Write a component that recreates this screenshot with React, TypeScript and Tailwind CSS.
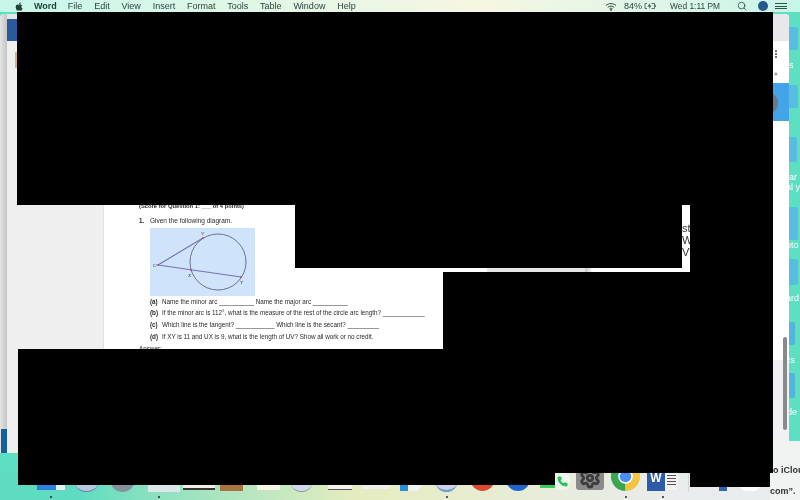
import { Search, Phone, Settings } from "lucide-react";

const menuItems = ["File", "Edit", "View", "Insert", "Format", "Tools", "Table", "Window", "Help"];

const AppleLogo = () => (
  <svg viewBox="0 0 24 24" className="w-[10px] h-[11px] fill-[#22403c]">
    <path d="M17.6 12.7c0-2.5 2-3.7 2.100-3.800-1.200-1.700-3-1.900-3.600-2-1.500-.2-3 .9-3.800.9s-2-.9-3.300-.9c-1.700 0-3.300 1-4.100 2.500-1.800 3.100-.5 7.600 1.200 10.100.9 1.200 1.900 2.600 3.200 2.500 1.300 0 1.800-.8 3.300-.8s2 .8 3.300.8c1.400 0 2.200-1.200 3.100-2.500 1-1.400 1.400-2.800 1.400-2.900-.1 0-2.800-1-2.800-4.400zM15.100 5.200c.7-.9 1.200-2 1-3.200-1 0-2.200.7-2.900 1.500-.6.700-1.200 1.900-1 3 1.100.1 2.200-.5 2.900-1.300z" />
  </svg>
);

const Wifi = () => (
  <svg viewBox="0 0 24 16" className="w-[12px] h-[9px] fill-none stroke-[#2f4a46]" strokeWidth="2">
    <path d="M2 6c6-5 14-5 20 0M5.500 9.500c4-3 9-3 13 0M9 12.500c2-1.300 4-1.300 6 0" />
    <circle cx="12" cy="15" r="1" fill="#2f4a46" />
  </svg>
);

const Battery = () => (
  <svg viewBox="0 0 24 12" className="w-[12px] h-[8px] fill-none stroke-[#2f4a46]">
    <path d="M6 1H2v10h4M15 1h6v10h-6M23 4v4" strokeWidth="1.500" />
    <path d="M12 0 7 7h4l-1 5 5-7h-4z" fill="#2f4a46" stroke="none" />
  </svg>
);

const MenuBar = () => (
  <div className="h-[12px] flex items-center justify-between pl-[14px] pr-[13px] text-[9px] leading-none text-[#2b4642] bg-gradient-to-r from-[#c6f7ea] via-[#f7f6e3] via-60% to-[#c8f5ea] font-['Liberation_Sans',sans-serif] blur-[0.25px]">
    <div className="flex items-center">
      <AppleLogo />
      <span className="ml-[10px] font-bold text-[#1f3a37]">Word</span>
      <div className="ml-[11px] flex gap-[11.800px]">
        {menuItems.map((m) => (
          <span key={m}>{m}</span>
        ))}
      </div>
    </div>
    <div className="flex items-center">
      <Wifi />
      <span className="ml-[7px]">84%</span>
      <span className="ml-[2px]"><Battery /></span>
      <span className="ml-[14px] text-[8.400px]">Wed 1:11 PM</span>
      <Search className="ml-[17px] w-[10px] h-[10px] text-[#33504c]" strokeWidth={2} />
      <span className="ml-[11px] w-[10px] h-[10px] rounded-full bg-[#27578f]" />
      <span className="ml-[7px] flex flex-col gap-[1.500px]">
        <span className="w-[12px] h-[1px] bg-[#33504c]" />
        <span className="w-[12px] h-[1px] bg-[#33504c]" />
        <span className="w-[12px] h-[1px] bg-[#33504c]" />
      </span>
    </div>
  </div>
);

const Diagram = () => (
  <svg viewBox="0 0 105 68" className="ml-[11px] mt-[2px] w-[105px] h-[68px] bg-[#cfe3fa] blur-[0.2px]">
    <circle cx="68" cy="34" r="28" fill="none" stroke="#66758c" strokeWidth="1" />
    <path d="M8 37 53 10" stroke="#7670b4" strokeWidth="1.100" />
    <path d="M8 37 91 49" stroke="#7670b4" strokeWidth="1.100" />
    <g fill="#c2477f">
      <circle cx="8" cy="37" r="1" />
      <circle cx="53" cy="10" r="1" />
      <circle cx="41" cy="42" r="1" />
      <circle cx="91" cy="49" r="1" />
    </g>
    <g fill="#33415c" fontSize="5" fontStyle="italic" fontFamily="'Liberation Serif', serif">
      <text x="51" y="7">V</text>
      <text x="3" y="39">U</text>
      <text x="38" y="49">X</text>
      <text x="90" y="56">Y</text>
    </g>
  </svg>
);

const Question = ({ label, text }: { label: string; text: string }) => (
  <div className="ml-[11px] h-[11.700px] flex items-center whitespace-nowrap">
    <span className="w-[12px] font-bold">{label}</span>
    <span>{text}</span>
  </div>
);

const DocPage = () => (
  <div className="w-[339px] h-full bg-white pl-[35px] text-[6.300px] leading-none text-[#2a2a2a] font-['Liberation_Sans',sans-serif] overflow-hidden blur-[0.3px]">
    <div className="h-[4px] flex items-center font-bold text-[5.800px]">(Score for Question 1: ___ of 4 points)</div>
    <div className="mt-[7px] h-[10px] flex items-center">
      <span className="w-[11px] font-bold">1.</span>
      <span className="text-[6.500px]">Given the following diagram.</span>
    </div>
    <Diagram />
    <div>
      <Question label="(a)" text="Name the minor arc __________ Name the major arc __________" />
      <Question label="(b)" text="If the minor arc is 112°, what is the measure of the rest of the circle arc length? ____________" />
      <Question label="(c)" text="Which line is the tangent? ___________ Which line is the secant? _________" />
      <Question label="(d)" text="If XY is 11 and UX is 9, what is the length of UV?  Show all work or no credit." />
    </div>
    <div className="mt-[3px]">Answer:</div>
  </div>
);

const Sidebar = () => (
  <div className="w-[10px] shrink-0 flex flex-col items-end h-full">
    <div className="mt-[11px] w-[2px] h-[16px] bg-[#e0b070]" />
  </div>
);

const Window = () => (
  <div className="absolute left-0 top-[14px] w-[789px] h-[439px] flex rounded-t-[4px] overflow-hidden bg-[#efefef]">
    <div className="w-[7px] shrink-0 h-full flex flex-col bg-gradient-to-r from-[#e4e4e4] to-[#c4c4c4]">
      <div className="flex-1" />
      <div className="h-[24px] ml-[1px] bg-[#14609f]" />
    </div>
    <div className="flex-1 flex flex-col">
      <div className="h-[5px] shrink-0 bg-[#e6e6e6]" />
      <div className="h-[22px] shrink-0 bg-[#2b5a9c]" />
      <div className="flex-1 flex min-h-0 bg-[#efefef]">
        <Sidebar />
        <div className="w-[87px] shrink-0 border-r border-[#e2e2e2]" />
        <div className="h-[335px] mt-[164px]">
          <DocPage />
        </div>
        <div className="flex-1" />
        {/* right rail */}
        <div className="w-[16px] shrink-0 flex flex-col bg-white relative">
          <div className="h-[26px] -mt-[26px] shrink-0 bg-[#e8e8ea]" />
          <div className="h-[9px] shrink-0" />
          <div className="pl-[2px] flex flex-col gap-[1px] shrink-0">
            <span className="w-[2px] h-[2px] rounded-full bg-[#444]" />
            <span className="w-[2px] h-[2px] rounded-full bg-[#444]" />
            <span className="w-[2px] h-[2px] rounded-full bg-[#444]" />
          </div>
          <div className="mt-[12px] pl-[1px] text-[7px] leading-none text-[#555] shrink-0">»</div>
          <div className="mt-[6px] h-[38px] shrink-0 bg-[#43a5e8] overflow-hidden">
            <div className="-ml-[4px] mt-[10px] w-[9px] h-[20px] rounded-r-full bg-[#6c7a88]" />
          </div>
          <div className="flex-1" />
          <div className="absolute left-[10px] top-[296px] w-[4px] h-[93px] rounded-full bg-[#8a8a8a]" />
          <div className="h-[93px] shrink-0 bg-[#f1f1f3]" />
        </div>
      </div>
    </div>
    {/* panel over the page */}
    <div className="absolute left-[295px] top-[150px] w-[395px] h-[108px] bg-white flex flex-col justify-end">
      <div className="flex-1 flex justify-end overflow-hidden">
        <div className="w-[8px] text-[11px] leading-[12px] text-[#333] font-['Liberation_Sans',sans-serif] overflow-hidden pt-[58px] blur-[0.3px]">
          <div className="whitespace-nowrap">st</div>
          <div className="whitespace-nowrap">W</div>
          <div className="whitespace-nowrap">V'</div>
        </div>
      </div>
      <div className="h-[4px] flex">
        <div className="w-[192px]" />
        <div className="w-[98px] bg-[#e6e6e6]" />
        <div className="w-[8px] bg-gradient-to-r from-[#c8c8c8] to-white" />
      </div>
    </div>
  </div>
);

const DesktopIcons = () => (
  <div className="absolute left-[789px] top-[12px] w-[11px] h-[430px] overflow-hidden text-[9px] leading-none text-white font-['Liberation_Sans',sans-serif] flex flex-col blur-[0.3px]">
    <div className="mt-[15px] h-[23px] w-[9px] rounded-r-[2px] bg-[#58bde0] shrink-0" />
    <div className="mt-[10.500px] whitespace-nowrap">s</div>
    <div className="mt-[15.500px] h-[23px] w-[9px] rounded-r-[2px] bg-[#58bde0] shrink-0" />
    <div className="mt-[29px] h-[25px] w-[8px] rounded-r-[2px] bg-[#58bde0] shrink-0" />
    <div className="mt-[10.500px] whitespace-nowrap">ar</div>
    <div className="mt-[1px] -ml-[3px] whitespace-nowrap">al y</div>
    <div className="mt-[15.500px] h-[33px] w-[9px] rounded-r-[2px] bg-[#58bde0] shrink-0" />
    <div className="mt-[0.500px] -ml-[3px] whitespace-nowrap">oto</div>
    <div className="mt-[9.500px] h-[26px] w-[9px] rounded-r-[2px] bg-[#58bde0] shrink-0" />
    <div className="mt-[8.500px] -ml-[3px] whitespace-nowrap">ard</div>
    <div className="mt-[19.500px] h-[23px] w-[6px] rounded-r-[2px] bg-[#52b5dc] shrink-0" />
    <div className="mt-[10.500px] -ml-[3px] whitespace-nowrap">cs</div>
    <div className="mt-[8.500px] h-[25px] w-[6px] rounded-r-[2px] bg-[#52b5dc] shrink-0" />
    <div className="mt-[9.500px] -ml-[2px] whitespace-nowrap">de</div>
  </div>
);

const ChromeIcon = () => (
  <svg viewBox="0 0 32 32" className="w-[31px] h-[31px]">
    <path d="M16 16 3 8.500A15 15 0 0 1 29 8.500z" fill="#d5473a" />
    <path d="M16 16 3 8.500A15 15 0 0 0 16 31z" fill="#3aa552" />
    <path d="M16 16 29 8.500A15 15 0 0 1 16 31z" fill="#f3c43f" />
    <circle cx="16" cy="16" r="7.500" fill="#fff" />
    <circle cx="16" cy="16" r="6" fill="#4b8df0" />
  </svg>
);

const Dock = () => (
  <div className="absolute left-0 bottom-0 w-[800px] h-[27px] bg-gradient-to-r from-[#5fdcc0] from-10% via-[#e6ecbf] via-45% to-[#e9ecec] to-85%">
    <div className="relative flex items-start h-[27px] blur-[0.3px]">
      <div className="ml-[37px] w-[28px] h-[17px] flex">
        <div className="w-[19px] bg-[#2d80dd]" />
        <div className="w-[9px] bg-[#e4f1f7]" />
      </div>
      <div className="ml-[8px] w-[27px] h-[19px] rounded-b-full bg-[#b9c8de] border-b border-[#6b7fb0]" />
      <div className="ml-[10px] w-[25px] h-[19px] rounded-b-full bg-[#86919a]" />
      <div className="ml-[13px] w-[32px] h-[19px] bg-[#dbe7e8]" />
      <div className="ml-[3px] w-[32px] h-[17px] bg-[#f0eee8] border-b-2 border-[#3c3431]" />
      <div className="ml-[5px] w-[23px] h-[18px] bg-[#a9743f]" />
      <div className="ml-[14px] w-[23px] h-[17px] bg-[#f7f5ea]" />
      <div className="ml-[10px] w-[23px] h-[19px] rounded-b-full bg-[#d4d8e6] border-b border-[#7fa0b8]" />
      <div className="ml-[15px] w-[24px] h-[17px] bg-[#f4f3ea] border-b border-[#5e4d64]" />
      <div className="ml-[10px] w-[28px] h-[16px] bg-[#eef0ea]" />
      <div className="ml-[10px] w-[22px] h-[18px] rounded-b-[8px] bg-[#eef3f4]">
        <div className="w-[8px] h-[18px] bg-[#2a8fdd]" />
      </div>
      <div className="ml-[13px] w-[23px] h-[19px] rounded-b-full bg-[#cfd2ec] border-b-2 border-[#6aa3c9]" />
      <div className="ml-[12px] w-[25px] h-[18px] rounded-b-full bg-[#dc4a2b]" />
      <div className="ml-[11px] w-[24px] h-[18px] rounded-b-full bg-[#1f66d0]" />
      <div className="ml-[10px] w-[15px] h-[15px] bg-[#3ecb5a]" />
      <div className="w-[15px] h-[17px] rounded-[6px] bg-[#eef6ee] flex items-center justify-center">
        <Phone className="w-[11px] h-[11px] text-[#2fbf5a] fill-[#2fbf5a]" />
      </div>
      <div className="ml-[6px] w-[28px] h-[17px] rounded-b-[3px] bg-[#8b8b8b] flex justify-center overflow-hidden">
        <Settings className="-mt-[6px] w-[22px] h-[22px] text-[#3c3c3c]" strokeWidth={3} />
      </div>
      <div className="ml-[6px] -mt-[12px] w-[31px] h-[31px]">
        <ChromeIcon />
      </div>
      <div className="ml-[6px] w-[18px] h-[18px] bg-[#2c5ca8] text-white text-[12px] font-bold leading-[11px] text-center font-['Liberation_Sans',sans-serif]">W</div>
      <div className="w-[13px] h-[17px] bg-[#f2f2f2] flex flex-col gap-[2px] pt-[2px] px-[2px]">
        <span className="h-[1px] bg-[#555]" />
        <span className="h-[1px] bg-[#555]" />
        <span className="h-[1px] bg-[#555]" />
        <span className="h-[1px] bg-[#555]" />
      </div>
      <div className="ml-[10px] w-[1px] h-[19px] bg-[#d4d4d4]" />
      <div className="ml-[30px] mt-[12px] w-[8px] h-[6px] bg-[#2f66b3]" />
      <div className="ml-[13px] mt-[12px] w-[20px] h-[6px] rounded-b-[6px] bg-white" />
    </div>
    <div className="absolute left-[50px] bottom-[2px] w-[2px] h-[2px] rounded-full bg-[#223]" />
    <div className="absolute left-[158px] bottom-[2px] w-[2px] h-[2px] rounded-full bg-[#223]" />
    <div className="absolute left-[446px] bottom-[2px] w-[2px] h-[2px] rounded-full bg-[#223]" />
    <div className="absolute left-[625px] bottom-[2px] w-[2px] h-[2px] rounded-full bg-[#223]" />
    <div className="absolute left-[662px] bottom-[2px] w-[2px] h-[2px] rounded-full bg-[#223]" />
  </div>
);

const Notification = () => (
  <div className="absolute left-[770px] top-[441px] w-[30px] h-[59px] bg-[#f1f2f2] overflow-hidden text-[9px] leading-none font-bold text-[#333] font-['Liberation_Sans',sans-serif] blur-[0.25px]">
    <div className="mt-[25px] ml-[3px] whitespace-nowrap">o iCloud</div>
    <div className="mt-[12px] whitespace-nowrap">com”.</div>
  </div>
);

// redacted blocks sit on top of the screenshot
const Redactions = () => (
  <>
    <div className="absolute left-[17px] top-[12px] w-[756px] h-[193px] bg-black" />
    <div className="absolute left-[295px] top-[205px] w-[387px] h-[63px] bg-black" />
    <div className="absolute left-[690px] top-[205px] w-[83px] h-[67px] bg-black" />
    <div className="absolute left-[443px] top-[272px] w-[330px] h-[77px] bg-black" />
    <div className="absolute left-[18px] top-[349px] w-[755px] h-[124px] bg-black" />
    <div className="absolute left-[18px] top-[473px] w-[537px] h-[12px] bg-black" />
    <div className="absolute left-[690px] top-[473px] w-[80px] h-[14px] bg-black" />
  </>
);

export default function App() {
  return (
    <div className="relative w-[800px] h-[500px] overflow-hidden bg-[#5fdfc2]">
      <MenuBar />
      <DesktopIcons />
      <Window />
      <Dock />
      <Notification />
      <Redactions />
    </div>
  );
}
